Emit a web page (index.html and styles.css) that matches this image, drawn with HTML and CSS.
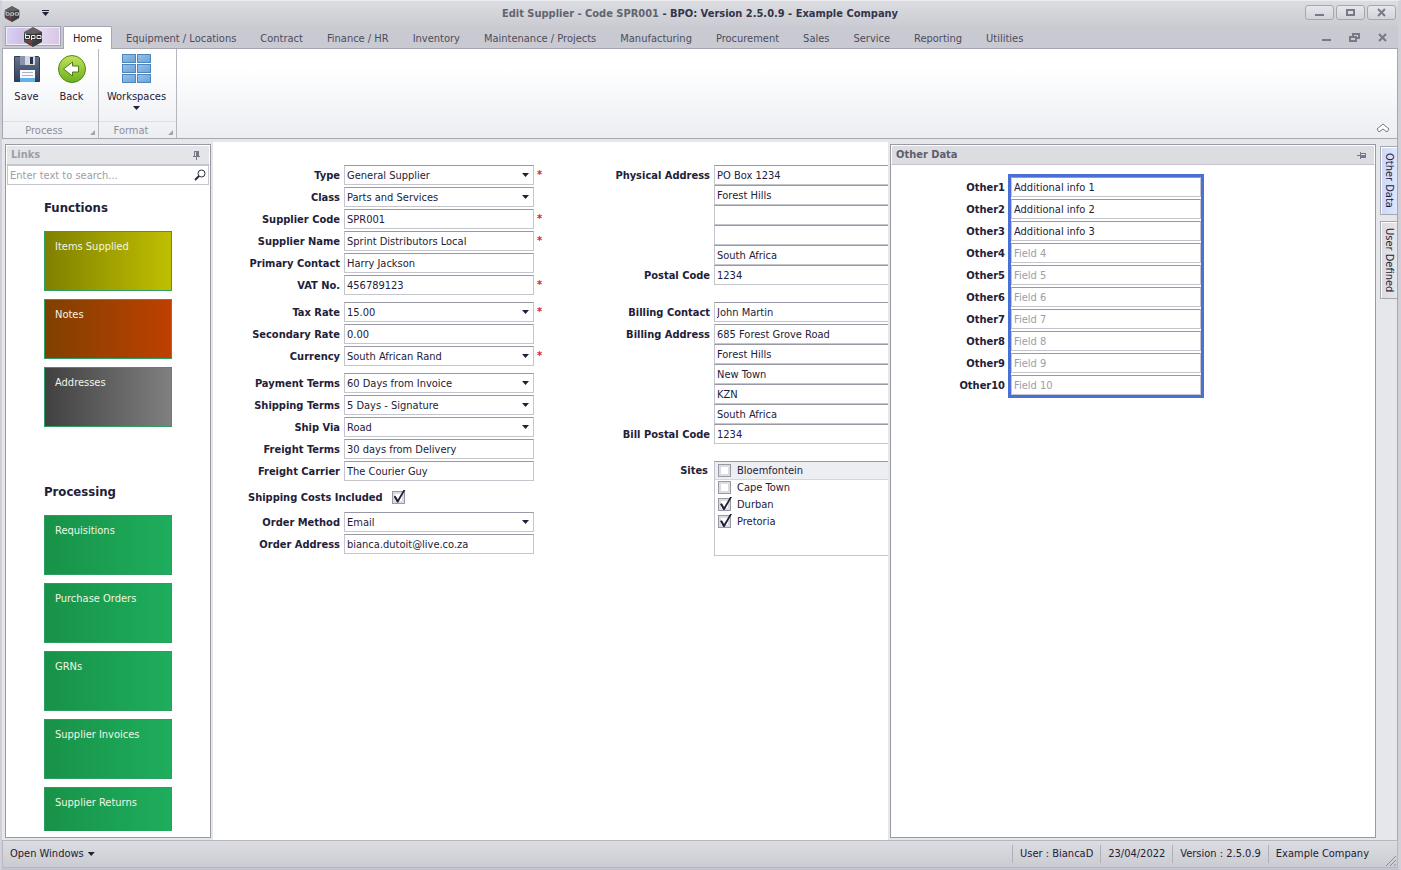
FILE: index.html
```
<!DOCTYPE html>
<html lang="en">
<head>
  <meta charset="UTF-8" />
  <meta name="viewport" content="width=device-width, initial-scale=1.0"/>
  <title>Edit Supplier - Code SPR001</title>
  <link rel="stylesheet" href="styles.css">
</head>
<body>
  <svg width="0" height="0" class="defs" aria-hidden="true">
    <defs>
      <linearGradient id="hexFill" x1="0" y1="0" x2="1" y2="1">
        <stop offset="0" stop-color="#6a6a6c"/>
        <stop offset="1" stop-color="#2b2b2d"/>
      </linearGradient>
      <linearGradient id="diskFill" x1="0" y1="0" x2="0" y2="1">
        <stop offset="0" stop-color="#66738f"/>
        <stop offset="1" stop-color="#333f5a"/>
      </linearGradient>
      <linearGradient id="backFill" x1="0" y1="0" x2="0" y2="1">
        <stop offset="0" stop-color="#c3e25a"/>
        <stop offset="1" stop-color="#6cb01e"/>
      </linearGradient>
      <linearGradient id="cellFill" x1="0" y1="0" x2="1" y2="1">
        <stop offset="0" stop-color="#98c2ea"/>
        <stop offset="1" stop-color="#6aa2d6"/>
      </linearGradient>
      <symbol id="logo" viewBox="0 0 20 20">
        <path d="M10 0 19 5v10l-9 5-9-5V5z" fill="url(#hexFill)"/>
        <path d="M10 1 18 5l-8 2-8-2z" fill="#626265"/>
        <path d="M1 7h18v6H1z" fill="#333335"/>
        <path d="M2.500 6.500v5h4v-3h-4M8.500 13v-4.500h3.500v3H9M14 8.500h4v3h-4z" fill="none" stroke="#ececee"/>
        <path d="M5 14h3v2M7 17l2 1" fill="none" stroke="#b03030"/>
      </symbol>
      <symbol id="pin" viewBox="0 0 9 9">
        <path d="M2 0h5v5h1v1H5v3H4V6H1V5h1z" fill="#77798a"/>
        <path d="M3 1h1v4H3z" fill="#e0e1e6"/>
      </symbol>
    </defs>
  </svg>

  <header class="titlebar">
    <svg class="title-logo"><use href="#logo"/></svg>
    <button class="quick" aria-label="Customize toolbar">
      <svg width="9" height="7"><path d="M1 0h7v1H1zM1 2h7L4.500 6z" fill="#1e2138"/></svg>
    </button>
    <h1><span>Edit Supplier - Code SPR001</span> - BPO: Version 2.5.0.9 - Example Company</h1>
    <div class="window-buttons">
      <button aria-label="Minimize"><svg width="11" height="9"><path d="M1 6h9v2H1z" fill="#777989"/></svg></button>
      <button aria-label="Maximize"><svg width="11" height="9"><path d="M2 2h7v5H2z" fill="none" stroke="#777989" stroke-width="2"/></svg></button>
      <button aria-label="Close"><svg width="11" height="9"><path d="M2 1l7 7M9 1L2 8" stroke="#777989" stroke-width="2"/></svg></button>
    </div>
  </header>

  <nav class="tabs">
    <button class="app-button" aria-label="Application menu"><svg><use href="#logo"/></svg></button>
    <a href="#" class="active">Home</a>
    <a href="#">Equipment / Locations</a>
    <a href="#">Contract</a>
    <a href="#">Finance / HR</a>
    <a href="#">Inventory</a>
    <a href="#">Maintenance / Projects</a>
    <a href="#">Manufacturing</a>
    <a href="#">Procurement</a>
    <a href="#">Sales</a>
    <a href="#">Service</a>
    <a href="#">Reporting</a>
    <a href="#">Utilities</a>
    <div class="child-buttons">
      <button aria-label="Minimize child"><svg width="11" height="9"><path d="M1 6h9v2H1z" fill="#777989"/></svg></button>
      <button aria-label="Restore child"><svg width="11" height="9"><path d="M4 4V1h6v4H7M1 4h6v4H1z" fill="none" stroke="#777989" stroke-width="2"/></svg></button>
      <button aria-label="Close child"><svg width="11" height="9"><path d="M2 1l7 7M9 1L2 8" stroke="#777989" stroke-width="2"/></svg></button>
    </div>
  </nav>

  <section class="ribbon">
    <div class="group">
      <div class="group-items">
        <button class="tool">
          <svg width="32" height="32">
            <path d="M3.500 3.500h24l1 1v24h-25z" fill="url(#diskFill)" stroke="#2f3a54"/>
            <path d="M9 3h15v9H9z" fill="#d5d9e2"/>
            <path d="M19 4h3v7h-3z" fill="#28324a"/>
            <path d="M9 3h5v9H9z" fill="#8b94a8"/>
            <path d="M9 17h15v12H9z" fill="#f7f9fc"/>
            <path d="M9 25h15v4H9z" fill="#5fb2ea"/>
            <path d="M11 19.500h11M11 22.500h11" stroke="#a9b1c0"/>
          </svg>
          Save
        </button>
        <button class="tool">
          <svg width="32" height="32">
            <circle cx="16" cy="16" r="13.500" fill="url(#backFill)" stroke="#4f8a17"/>
            <path d="M7.500 16l9-7v4h6v6h-6v4z" fill="#fff" stroke="#4c7a1b"/>
          </svg>
          Back
        </button>
      </div>
      <div class="group-name">Process<i></i></div>
    </div>
    <div class="group">
      <div class="group-items">
        <button class="tool wide">
          <svg width="32" height="32">
            <g fill="url(#cellFill)" stroke="#4d86bb">
              <rect x="1.500" y="1.500" width="13" height="8"/>
              <rect x="16.500" y="1.500" width="13" height="8"/>
              <rect x="1.500" y="11.500" width="13" height="8"/>
              <rect x="16.500" y="11.500" width="13" height="8"/>
              <rect x="1.500" y="21.500" width="13" height="8"/>
              <rect x="16.500" y="21.500" width="13" height="8"/>
            </g>
          </svg>
          Workspaces
          <i class="arrow"></i>
        </button>
      </div>
      <div class="group-name">Format<i></i></div>
    </div>
    <button class="collapse" aria-label="Collapse ribbon">
      <svg width="14" height="10"><path d="M7 1l6 5-2 3-4-3-4 3-2-3z" fill="#fff" stroke="#777a86"/></svg>
    </button>
  </section>

  <main>
    <aside class="panel links">
      <h2 class="inactive">Links<svg width="9" height="9"><use href="#pin"/></svg></h2>
      <div class="search">
        <input type="text" placeholder="Enter text to search..." aria-label="Search links">
        <svg width="12" height="12"><circle cx="7.500" cy="4.500" r="3.500" fill="none" stroke="#2a2c40"/><path d="M5 7L1 11" stroke="#2a2c40" stroke-width="2"/></svg>
      </div>
      <div class="tiles">
        <h3>Functions</h3>
        <button class="tile olive">Items Supplied</button>
        <button class="tile rust">Notes</button>
        <button class="tile gray">Addresses</button>
        <h3 class="second">Processing</h3>
        <button class="tile">Requisitions</button>
        <button class="tile">Purchase Orders</button>
        <button class="tile">GRNs</button>
        <button class="tile">Supplier Invoices</button>
        <button class="tile">Supplier Returns</button>
      </div>
    </aside>

    <form class="supplier">
      <div class="column">
        <div class="fields">
          <div class="row"><label for="type">Type</label><span class="combo"><select id="type"><option>General Supplier</option></select></span><b>*</b></div>
          <div class="row"><label for="class">Class</label><span class="combo"><select id="class"><option>Parts and Services</option></select></span></div>
          <div class="row"><label for="code">Supplier Code</label><input type="text" id="code" value="SPR001"><b>*</b></div>
          <div class="row"><label for="name">Supplier Name</label><input type="text" id="name" value="Sprint Distributors Local"><b>*</b></div>
          <div class="row"><label for="contact">Primary Contact</label><input type="text" id="contact" value="Harry Jackson"></div>
          <div class="row"><label for="vat">VAT No.</label><input type="text" id="vat" value="456789123"><b>*</b></div>
        </div>
        <div class="fields">
          <div class="row"><label for="tax">Tax Rate</label><span class="combo"><select id="tax"><option>15.00</option></select></span><b>*</b></div>
          <div class="row"><label for="rate2">Secondary Rate</label><input type="text" id="rate2" value="0.00"></div>
          <div class="row"><label for="currency">Currency</label><span class="combo"><select id="currency"><option>South African Rand</option></select></span><b>*</b></div>
        </div>
        <div class="fields">
          <div class="row"><label for="payment">Payment Terms</label><span class="combo"><select id="payment"><option>60 Days from Invoice</option></select></span></div>
          <div class="row"><label for="shipping">Shipping Terms</label><span class="combo"><select id="shipping"><option>5 Days - Signature</option></select></span></div>
          <div class="row"><label for="via">Ship Via</label><span class="combo"><select id="via"><option>Road</option></select></span></div>
          <div class="row"><label for="freight">Freight Terms</label><input type="text" id="freight" value="30 days from Delivery"></div>
          <div class="row"><label for="carrier">Freight Carrier</label><input type="text" id="carrier" value="The Courier Guy"></div>
        </div>
        <div class="row included"><label for="included">Shipping Costs Included</label><input type="checkbox" id="included" checked></div>
        <div class="fields">
          <div class="row"><label for="method">Order Method</label><span class="combo"><select id="method"><option>Email</option></select></span></div>
          <div class="row"><label for="order">Order Address</label><input type="text" id="order" value="bianca.dutoit@live.co.za"></div>
        </div>
      </div>

      <div class="column">
        <div class="fields address">
          <div class="row"><label for="phys1">Physical Address</label><input type="text" id="phys1" value="PO Box 1234"></div>
          <div class="row"><label></label><input type="text" aria-label="Physical address 2" value="Forest Hills"></div>
          <div class="row"><label></label><input type="text" aria-label="Physical address 3"></div>
          <div class="row"><label></label><input type="text" aria-label="Physical address 4"></div>
          <div class="row"><label></label><input type="text" aria-label="Physical address 5" value="South Africa"></div>
          <div class="row"><label for="postal">Postal Code</label><input type="text" id="postal" value="1234"></div>
        </div>
        <div class="row billing"><label for="billing">Billing Contact</label><input type="text" id="billing" value="John Martin"></div>
        <div class="fields address">
          <div class="row"><label for="bill1">Billing Address</label><input type="text" id="bill1" value="685 Forest Grove Road"></div>
          <div class="row"><label></label><input type="text" aria-label="Billing address 2" value="Forest Hills"></div>
          <div class="row"><label></label><input type="text" aria-label="Billing address 3" value="New Town"></div>
          <div class="row"><label></label><input type="text" aria-label="Billing address 4" value="KZN"></div>
          <div class="row"><label></label><input type="text" aria-label="Billing address 5" value="South Africa"></div>
          <div class="row"><label for="billpostal">Bill Postal Code</label><input type="text" id="billpostal" value="1234"></div>
        </div>
        <div class="row sites">
          <span class="label">Sites</span>
          <div class="site-list">
            <label class="selected"><input type="checkbox">Bloemfontein</label>
            <label><input type="checkbox">Cape Town</label>
            <label><input type="checkbox" checked>Durban</label>
            <label><input type="checkbox" checked>Pretoria</label>
          </div>
        </div>
      </div>
    </form>

    <aside class="panel other">
      <h2>Other Data<svg width="9" height="9" class="docked"><use href="#pin"/></svg></h2>
      <div class="other-data">
        <div class="other-labels">
          <label for="other1">Other1</label>
          <label for="other2">Other2</label>
          <label for="other3">Other3</label>
          <label for="other4">Other4</label>
          <label for="other5">Other5</label>
          <label for="other6">Other6</label>
          <label for="other7">Other7</label>
          <label for="other8">Other8</label>
          <label for="other9">Other9</label>
          <label for="other10">Other10</label>
        </div>
        <div class="highlight">
          <input type="text" id="other1" value="Additional info 1">
          <input type="text" id="other2" value="Additional info 2">
          <input type="text" id="other3" value="Additional info 3">
          <input type="text" id="other4" placeholder="Field 4">
          <input type="text" id="other5" placeholder="Field 5">
          <input type="text" id="other6" placeholder="Field 6">
          <input type="text" id="other7" placeholder="Field 7">
          <input type="text" id="other8" placeholder="Field 8">
          <input type="text" id="other9" placeholder="Field 9">
          <input type="text" id="other10" placeholder="Field 10">
        </div>
      </div>
    </aside>

    <div class="side-tabs">
      <button class="active">Other Data</button>
      <button>User Defined</button>
    </div>
  </main>

  <footer>
    <button>Open Windows<i class="arrow"></i></button>
    <span>User : BiancaD</span>
    <span>23/04/2022</span>
    <span>Version : 2.5.0.9</span>
    <span>Example Company</span>
    <svg width="12" height="12"><path d="M1 11L11 1M5 11l6-6M9 11l2-2" stroke="#8d8f9b"/></svg>
  </footer>
</body>
</html>
```
FILE: styles.css
```
* {
  box-sizing: border-box;
}

body {
  margin: 0;
  height: 100vh;
  display: flex;
  flex-direction: column;
  background: #e6e7eb;
  border: 1px solid #b9bac2;
  border-width: 1px 3px 2px 2px;
  border-color: #ececf0 #d0d1d8 #c3c4cc #d0d1d8;
  font-family: "DejaVu Sans Condensed", "Noto Sans", sans-serif;
  font-size: 11px;
  line-height: 14px;
  color: #1e2138;
  overflow: hidden;
}

button, input, select {
  font: inherit;
  color: inherit;
  margin: 0;
}

button {
  border: none;
  background: none;
  padding: 0;
  cursor: pointer;
}

a {
  color: inherit;
  text-decoration: none;
}

.defs {
  position: absolute;
}

.arrow {
  width: 7px;
  height: 4px;
  background: #1e2138;
  clip-path: polygon(0 0, 100% 0, 50% 100%);
}

/* title bar */
.titlebar {
  display: flex;
  align-items: center;
  height: 25px;
  flex: none;
  padding: 0 2px 0 2px;
  background: linear-gradient(#dcdde1, #cbccd3);
}

.title-logo {
  width: 16px;
  height: 16px;
}

.quick {
  width: 12px;
  margin-left: 19px;
}

.titlebar h1 {
  flex: 1;
  margin: 0;
  padding-left: 44px;
  text-align: center;
  font-size: 11px;
  color: #33354a;
}

.titlebar h1 span {
  color: #62646f;
}

.window-buttons {
  display: flex;
  gap: 2px;
  margin-bottom: 2px;
}

.window-buttons button {
  width: 29px;
  height: 15px;
  border: 1px solid #a6a7b1;
  border-radius: 3px;
  background: linear-gradient(#e6e7eb, #d3d4da);
}

.window-buttons svg, .child-buttons svg {
  display: block;
  margin: 0 auto;
}

/* ribbon tabs */
.tabs {
  display: flex;
  height: 22px;
  flex: none;
  padding-left: 3px;
  background: #c9c9d1;
  color: #4b4d5e;
}

.tabs a {
  padding: 6px 12px 0;
  white-space: nowrap;
}

.tabs a.active {
  position: relative;
  width: 49px;
  padding: 5px 0 0;
  margin-right: 2px;
  height: 23px;
  border: 1px solid #a6a7b1;
  border-bottom: none;
  border-radius: 2px 2px 0 0;
  background: #fff;
  color: #1e2138;
  text-align: center;
}

.app-button {
  width: 56px;
  height: 20px;
  margin-right: 2px;
  border: 1px solid #a2a3b0;
  box-shadow: inset 0 0 0 1px #f0ecf8;
  background: linear-gradient(100deg, #d9d3f4, #d0c0e6 30%, #e6d8f0 60%, #d6c4e4);
}

.app-button svg {
  display: block;
  width: 20px;
  height: 20px;
  margin: 0 auto;
}

.child-buttons {
  display: flex;
  gap: 17px;
  margin-left: auto;
  padding-right: 10px;
  align-items: center;
}

/* ribbon */
.ribbon {
  display: flex;
  flex: none;
  height: 91px;
  border: 1px solid #a6a7b1;
  background: linear-gradient(#fff 20%, #eceef2);
}

.group {
  display: flex;
  flex-direction: column;
  border-right: 1px solid #b5b6be;
}

.group-items {
  display: flex;
  flex: 1;
  padding: 4px 4px 0 1px;
}

.group + .group .group-items {
  padding: 4px 3px 0 1px;
}

.tool {
  display: flex;
  flex-direction: column;
  align-items: center;
  width: 45px;
}

.tool svg {
  margin-bottom: 5px;
}

.tool.wide {
  width: 73px;
}

.tool .arrow {
  margin-top: 2px;
}

.group-name {
  position: relative;
  height: 17px;
  padding: 2px 13px 0 0;
  border-top: 1px solid #dcdde2;
  text-align: center;
  color: #8d8f9b;
}

.group-name i {
  position: absolute;
  right: 3px;
  bottom: 3px;
  width: 5px;
  height: 5px;
  background: #a3a5ae;
  clip-path: polygon(100% 0, 100% 100%, 0 100%);
}

.collapse {
  align-self: flex-end;
  margin: 0 7px 5px auto;
}

.collapse svg {
  display: block;
}

/* main area */
main {
  display: flex;
  flex: 1;
  min-height: 0;
  padding-left: 3px;
}

.panel {
  display: flex;
  flex-direction: column;
  margin: 5px 0 2px;
  border: 1px solid #9899a4;
  background: #fff;
}

.panel h2 {
  display: flex;
  justify-content: space-between;
  align-items: center;
  height: 20px;
  flex: none;
  margin: 0;
  padding: 0 8px 0 4px;
  border: 1px solid #fff;
  border-bottom-color: #c5c6cd;
  background: #dcdde1;
  font-size: 11px;
  color: #5d5f6d;
}

.panel h2.inactive {
  background: #e4e5e9;
  color: #9c9ea9;
}

.docked {
  transform: rotate(90deg);
}

.links {
  width: 206px;
  flex: none;
  padding-bottom: 6px;
}

.search {
  display: flex;
  align-items: center;
  height: 20px;
  flex: none;
  margin: 0 1px;
  padding-right: 2px;
  border: 1px solid #c5c6cd;
}

::placeholder {
  color: #9c9ea9;
  opacity: 1;
}

.tiles {
  display: flex;
  flex-direction: column;
  flex: 1;
  min-height: 0;
  gap: 8px;
  padding: 0 38px;
  overflow: hidden;
}

.tiles h3 {
  flex: none;
  height: 20px;
  margin: 14px 0 4px;
  font-size: 13px;
  line-height: 18px;
}

.tiles h3.second {
  margin-top: 48px;
}

.tile {
  flex: none;
  height: 60px;
  padding: 0 10px 28px;
  border: 1px solid #2f9e63;
  background: linear-gradient(90deg, #189248, #1eae5d);
  color: #f1f5e4;
  text-align: left;
}

.olive {
  background: linear-gradient(90deg, #808000, #bfbf00);
}

.rust {
  background: linear-gradient(90deg, #804000, #bf4000);
}

.gray {
  background: linear-gradient(90deg, #404040, #808080);
}

/* supplier form */
.supplier {
  display: flex;
  flex: 1;
  min-width: 0;
  gap: 73px;
  margin: 3px 2px 0;
  padding: 23px 0 0 24px;
  background: #fff;
  overflow: hidden;
}

.column {
  flex: none;
}

.fields {
  display: flex;
  flex-direction: column;
  gap: 2px;
  margin-bottom: 7px;
}

.row {
  display: flex;
  align-items: center;
}

.row > label, .row > .label {
  width: 103px;
  margin-right: 4px;
  padding-top: 1px;
  text-align: right;
  font-weight: bold;
  white-space: nowrap;
}

.row b {
  width: 0;
  margin-left: 3px;
  color: #e0202c;
}

input[type="text"], select {
  width: 190px;
  height: 20px;
  padding: 0 2px;
  border: 1px solid #c5c6cd;
  border-top-color: #9899a4;
  border-radius: 0;
  background: #fff;
}

select {
  appearance: none;
  padding-top: 1px;
}

.combo {
  position: relative;
  height: 20px;
}

.combo::after {
  content: "";
  position: absolute;
  right: 5px;
  top: 8px;
  width: 7px;
  height: 4px;
  background: #1e2138;
  clip-path: polygon(0 0, 100% 0, 50% 100%);
}

.search input[type="text"] {
  flex: 1;
  min-width: 0;
  height: 18px;
  border: none;
  outline: none;
}

input[type="checkbox"] {
  appearance: none;
  position: relative;
  width: 13px;
  height: 13px;
  flex: none;
  border: 1px solid #9899a4;
  background: #fff;
  box-shadow: inset 0 0 0 2px #dcdde3;
}

input[type="checkbox"]:checked::after {
  content: "";
  position: absolute;
  left: 1px;
  top: -2px;
  width: 12px;
  height: 13px;
  background: #1e2138;
  clip-path: polygon(0 54%, 16% 48%, 34% 76%, 84% 0, 100% 0, 38% 100%, 28% 100%);
}

.included {
  height: 18px;
  margin-bottom: 6px;
}

.included label {
  width: auto;
  margin: 0 9px 0 11px;
}

.address {
  gap: 0;
  margin-bottom: 17px;
}

.billing {
  margin-bottom: 2px;
}

.column + .column .row > label, .column + .column .row > .label {
  width: 100px;
}

.sites {
  align-items: flex-start;
}

.sites .label {
  padding: 3px 2px 0 0;
}

.site-list {
  width: 190px;
  height: 95px;
  border: 1px solid #c5c6cd;
  border-top-color: #9899a4;
}

.site-list label {
  display: flex;
  align-items: center;
  gap: 6px;
  height: 17px;
  padding-left: 3px;
}

.site-list .selected {
  background: #eceef2;
  box-shadow: 0 1px #d5d6dc;
}

/* other data */
.other {
  width: 486px;
  flex: none;
}

.other-data {
  display: flex;
  align-items: flex-start;
  padding: 9px 0 0 60px;
}

.other-labels {
  width: 54px;
  margin-right: 3px;
  padding-top: 7px;
  text-align: right;
  font-weight: bold;
}

.other-labels label {
  display: block;
  height: 22px;
}

.highlight {
  display: flex;
  flex-direction: column;
  gap: 2px;
  border: 3px solid #4a6fd6;
}

/* vertical tabs */
.side-tabs {
  display: flex;
  flex-direction: column;
  gap: 6px;
  width: 22px;
  flex: none;
  padding: 7px 0 0 4px;
  border-right: 1px solid #a6a7b1;
}

.side-tabs button {
  padding: 6px 1px;
  border: 1px solid #a6a7b1;
  border-right: none;
  box-shadow: inset 1px 1px #fff;
  background: linear-gradient(90deg, #dadbdf, #e6e7eb);
  writing-mode: vertical-rl;
  text-align: left;
}

.side-tabs .active {
  background: linear-gradient(90deg, #ccd8f6, #dfe6fb);
}

/* status bar */
footer {
  display: flex;
  align-items: center;
  height: 28px;
  flex: none;
  border: 1px solid #b5b6be;
  background: linear-gradient(#dcdde1, #cbccd3);
}

footer button {
  display: flex;
  align-items: center;
  gap: 4px;
  margin-right: auto;
  padding-left: 7px;
}

footer span {
  padding: 2px 7px;
  border-left: 1px solid #aeafb8;
}

footer svg {
  align-self: flex-end;
  margin-left: 9px;
}
```
